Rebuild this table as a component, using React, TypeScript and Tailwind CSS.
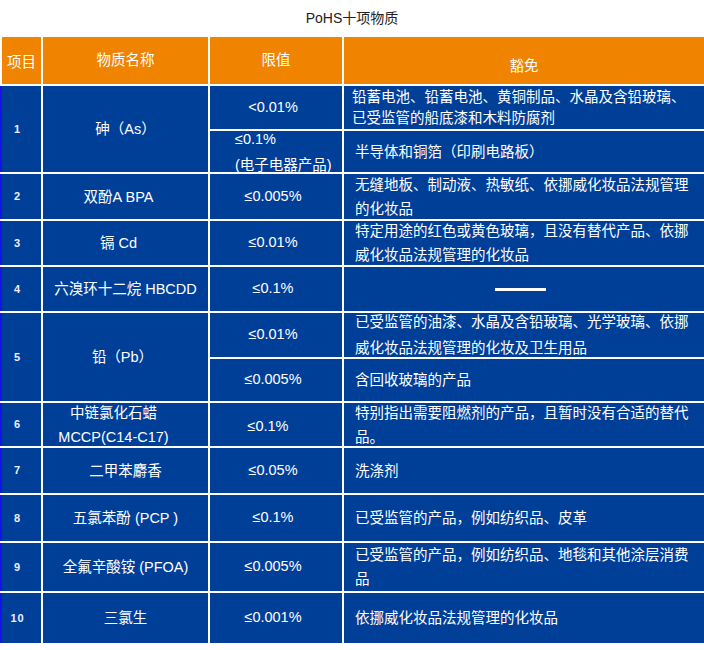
import React from "react";

type Sub = { limit: string[]; exempt: string[]; h: string; limitAlign?: string; exemptPad?: string; lead?: string };
type Row = { no: string; name: string[]; h: string; nameShift?: string; subs: Sub[]; dash?: boolean };

const rows: Row[] = [
  {
    no: "1",
    name: ["砷（As）"],
    h: "h-[86px]",
    subs: [
      {
        limit: ["<0.01%"],
        exempt: ["铅蓄电池、铅蓄电池、黄铜制品、水晶及含铅玻璃、", "已受监管的船底漆和木料防腐剂"],
        h: "h-[43px]",
        exemptPad: "pl-[8px]",
        lead: "leading-[21px]",
      },
      {
        limit: ["≤0.1%", "(电子电器产品)"],
        exempt: ["半导体和铜箔（印刷电路板）"],
        h: "h-[41px]",
        limitAlign: "items-start pl-[25px] leading-[26px]",
      },
    ],
  },
  {
    no: "2",
    name: ["双酚A BPA"],
    h: "h-[45px]",
    nameShift: "pr-[14px]",
    subs: [{ limit: ["≤0.005%"], exempt: ["无缝地板、制动液、热敏纸、依挪威化妆品法规管理", "的化妆品"], h: "h-[45px]" }],
  },
  {
    no: "3",
    name: ["镉 Cd"],
    h: "h-[44px]",
    nameShift: "pr-[14px]",
    subs: [{ limit: ["≤0.01%"], exempt: ["特定用途的红色或黄色玻璃，且没有替代产品、依挪", "威化妆品法规管理的化妆品"], h: "h-[44px]" }],
  },
  {
    no: "4",
    name: ["六溴环十二烷 HBCDD"],
    h: "h-[44px]",
    dash: true,
    subs: [{ limit: ["≤0.1%"], exempt: [], h: "h-[44px]" }],
  },
  {
    no: "5",
    name: ["铅（Pb）"],
    h: "h-[88px]",
    nameShift: "pr-[6px]",
    subs: [
      { limit: ["≤0.01%"], exempt: ["已受监管的油漆、水晶及含铅玻璃、光学玻璃、依挪", "威化妆品法规管理的化妆及卫生用品"], h: "h-[44px]", lead: "leading-[26px]" },
      { limit: ["≤0.005%"], exempt: ["含回收玻璃的产品"], h: "h-[42px]" },
    ],
  },
  {
    no: "6",
    name: ["中链氯化石蜡", "MCCP(C14-C17)"],
    h: "h-[43px]",
    nameShift: "pr-[24px]",
    subs: [{ limit: ["≤0.1%"], exempt: ["特别指出需要阻燃剂的产品，且暂时没有合适的替代", "品。"], h: "h-[43px]", limitAlign: "items-center pr-[16px] pt-[4px]" }],
  },
  {
    no: "7",
    name: ["二甲苯麝香"],
    h: "h-[45px]",
    subs: [{ limit: ["≤0.05%"], exempt: ["洗涤剂"], h: "h-[45px]" }],
  },
  {
    no: "8",
    name: ["五氯苯酚 (PCP )"],
    h: "h-[46px]",
    subs: [{ limit: ["≤0.1%"], exempt: ["已受监管的产品，例如纺织品、皮革"], h: "h-[46px]" }],
  },
  {
    no: "9",
    name: ["全氟辛酸铵 (PFOA)"],
    h: "h-[48px]",
    subs: [{ limit: ["≤0.005%"], exempt: ["已受监管的产品，例如纺织品、地毯和其他涂层消费", "品"], h: "h-[48px]" }],
  },
  {
    no: "10",
    name: ["三氯生"],
    h: "h-[50px]",
    subs: [{ limit: ["≤0.001%"], exempt: ["依挪威化妆品法规管理的化妆品"], h: "h-[50px]" }],
  },
];

export default function App() {
  return (
    <div className="w-[704px] h-[650px] bg-white font-['Liberation_Sans','Noto_Sans_CJK_SC',sans-serif] text-[14.5px] overflow-hidden">
      {/* 标题 */}
      <div className="h-[37px] flex items-center justify-center text-[14px] text-[#222]">PoHS十项物质</div>

      <div className="flex flex-col gap-[2px] bg-white">
        {/* 表头 */}
        <div className="grid grid-cols-[39px_165px_132px_1fr] gap-x-[2px] h-[47px] border-l-2 border-white text-white">
          <div className="bg-[#f08300] flex items-center justify-center pt-[4px]">项目</div>
          <div className="bg-[#f08300] flex items-center justify-center">物质名称</div>
          <div className="bg-[#f08300] flex items-center justify-center">限值</div>
          <div className="bg-[#f08300] flex items-center justify-center pt-[12px]">豁免</div>
        </div>

        {rows.map((r) => (
          <div
            key={r.no}
            className={`grid grid-cols-[39px_165px_1fr] grid-rows-[minmax(0,1fr)] gap-x-[2px] border-l-2 border-[#1414e6] text-white ${r.h}`}
          >
            <div className="bg-[#003f98] flex items-center justify-center pr-[8px] text-[11px] font-bold text-[#eef0ff] tracking-[1px]">
              {r.no}
            </div>
            <div className={`bg-[#003f98] min-h-0 flex flex-col items-center justify-center leading-[24px] ${r.nameShift ?? ""}`}>
              {r.name.map((n) => (
                <div key={n} className="shrink-0">{n}</div>
              ))}
            </div>
            <div className="flex flex-col gap-y-[2px]">
              {r.subs.map((s, i) => (
                <div key={i} className={`grid grid-cols-[132px_1fr] grid-rows-[minmax(0,1fr)] gap-x-[2px] ${s.h}`}>
                  <div className={`bg-[#003f98] min-h-0 flex flex-col justify-center ${s.limitAlign ?? "items-center pr-[6px]"}`}>
                    {s.limit.map((l) => (
                      <div key={l} className="shrink-0">{l}</div>
                    ))}
                  </div>
                  <div
                    className={`bg-[#003f98] min-h-0 flex flex-col justify-center whitespace-nowrap ${s.exemptPad ?? "pl-[11px]"} ${s.lead ?? "leading-[24px]"}`}
                  >
                    {r.dash ? (
                      <div className="self-center w-[51px] h-[3px] bg-white mr-[18px]" />
                    ) : (
                      s.exempt.map((e) => <div key={e} className="shrink-0">{e}</div>)
                    )}
                  </div>
                </div>
              ))}
            </div>
          </div>
        ))}
      </div>
    </div>
  );
}
